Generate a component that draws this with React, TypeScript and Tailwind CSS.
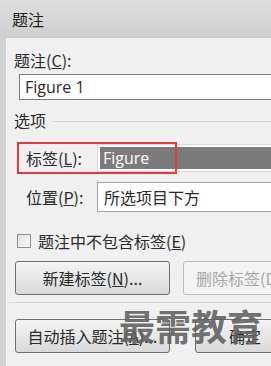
import React from 'react';

const cjk = "font-['Noto_Sans_CJK_SC','Noto_Sans',sans-serif]";
const latin = "font-['Open_Sans','Noto_Sans_CJK_SC',sans-serif]";

const Btn: React.FC<{ children: React.ReactNode; disabled?: boolean; className?: string }> = ({ children, disabled, className }) => (
  <div
    className={`shrink-0 h-[34px] flex items-center justify-center rounded-[3px] border text-[16px] whitespace-nowrap ${
      disabled
        ? 'border-[#b9bcbf] bg-[#f3f3f3] text-[#a8a8a8]'
        : 'border-[#6f6f6f] bg-gradient-to-b from-[#f4f4f4] to-[#d9d9d9] text-[#2a2a2a]'
    } ${className ?? ''}`}
  >
    {children}
  </div>
);

export default function App() {
  return (
    <div className={`w-[271px] h-[366px] overflow-hidden relative bg-[#f0f0f0] ${cjk}`}>
      {/* Title bar */}
      <div className="h-[38px] bg-gradient-to-b from-[#dedede] to-[#cfcfcf] flex items-center pl-[12px] text-[16px] text-[#1e1e1e]">
        题注
      </div>

      <div className="flex">
        <div className="shrink-0 w-[6px] h-[328px] bg-[#d2d2d2]" />
        <div className="flex-1 min-w-0 relative">
          {/* Caption */}
          <div className="mt-[12px] ml-[8px] h-[20px] leading-[20px] text-[16px] text-[#2a2a2a]">
            题注(<span className="underline">C</span>):
          </div>
          <div className={`mt-[4px] ml-[13px] w-[280px] h-[26px] border border-[#7a7a7a] bg-white flex items-center pl-[5px] text-[16px] text-[#2a2a2a] ${latin}`}>
            Figure 1
          </div>

          {/* Options group */}
          <div className="mt-[10px] ml-[8px] h-[20px] flex items-center text-[16px] text-[#2a2a2a]">
            <span>选项</span>
            <div className="flex-1 h-px bg-[#d5d5d5] ml-[6px] mt-[2px]" />
          </div>

          {/* Label row */}
          <div className="mt-[14px] h-[28px] flex items-center">
            <span className="shrink-0 ml-[20px] w-[71px] text-[16px] text-[#2a2a2a]">
              标签(<span className="underline">L</span>):
            </span>
            <div className="shrink-0 w-[200px] h-[28px] border border-[#d9d9d9] bg-white p-[2px]">
              <div className={`h-full bg-[#7b7b7b] flex items-center pl-[3px] text-[16px] text-white ${latin}`}>
                Figure
              </div>
            </div>
          </div>

          {/* Position row */}
          <div className="mt-[10px] h-[30px] flex items-center">
            <span className="shrink-0 ml-[20px] w-[71px] text-[16px] text-[#2a2a2a]">
              位置(<span className="underline">P</span>):
            </span>
            <div className="shrink-0 w-[200px] h-[30px] border border-[#a6a6a6] bg-white flex items-center pl-[6px] text-[16px] text-[#2a2a2a]">
              所选项目下方
            </div>
          </div>

          {/* Checkbox */}
          <div className="mt-[19px] h-[20px] flex items-center">
            <div className="shrink-0 ml-[11px] w-[14px] h-[14px] border border-[#8e8e8e] bg-gradient-to-br from-[#e2e2e2] to-[#f8f8f8]" />
            <span className="ml-[7px] text-[16px] text-[#2a2a2a] whitespace-nowrap">
              题注中不包含标签(<span className="underline">E</span>)
            </span>
          </div>

          {/* Label buttons */}
          <div className="mt-[10px] flex">
            <Btn className="ml-[9px] w-[155px]">
              新建标签(<span className="underline">N</span>)...
            </Btn>
            <Btn disabled className="ml-[13px] w-[110px] !justify-start pl-[12px]">
              删除标签(D)
            </Btn>
          </div>

          <div className="mt-[7px] ml-[3px] h-px bg-[#d8d8d8]" />

          {/* Bottom buttons */}
          <div className="mt-[16px] flex">
            <Btn className="ml-[9px] w-[155px]">
              自动插入题注(<span className="underline">A</span>)...
            </Btn>
            <Btn className="ml-[25px] w-[100px]">确定</Btn>
          </div>
        </div>
      </div>

      {/* Red highlight annotation */}
      <div className="absolute left-[17px] top-[142px] w-[160px] h-[32px] border-2 border-[#e8393c]" />

      {/* Watermark */}
      <div className="absolute left-[119px] top-[305px] text-[36px] leading-[40px] font-bold text-[#5f5f5f]/90">
        最需教育
      </div>
    </div>
  );
}
